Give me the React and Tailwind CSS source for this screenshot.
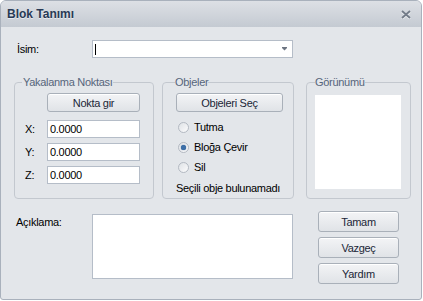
import React from 'react';

const btn = 'flex items-center justify-center rounded-[3px] border border-[#a9b0b9] bg-linear-to-b from-[#f3f4f6] to-[#e0e3e7] shadow-[inset_0_1px_0_#ffffff] text-[#1b2637]';
const field = 'border border-[#b5bdc8] bg-white';
const group = 'h-[124px] min-w-0 shrink-0 rounded-[4px] border border-[#c3c8cf]';

const Radio = ({ checked, label }) => (
    <div className="flex h-[20px] items-center gap-[5px] pl-[3px]">
        <div className="flex h-[11px] w-[11px] items-center justify-center rounded-full border border-[#b3b9c2] bg-linear-to-br from-[#dfe2e6] to-[#fbfbfc]">
            {checked && <div className="h-[5px] w-[5px] rounded-full bg-[#3d6fa8] shadow-[0_0_1px_#1d4a80]"></div>}
        </div>
        <span>{label}</span>
    </div>
);

const CoordRow = ({ axis }) => (
    <div className="flex h-[18px] items-center">
        <span className="w-[22px]">{axis}:</span>
        <div className={`${field} flex h-[18px] w-[93px] items-center pl-[2px]`}>0.0000</div>
    </div>
);

const App = () => {
    return (
        <div className="h-[301px] w-[423px] bg-white font-['Liberation_Sans',Arial,sans-serif] text-[11px] leading-[14px] tracking-[-0.3px] text-black">
            <div className="flex h-[300px] w-[422px] flex-col overflow-hidden rounded-t-[6px] rounded-b-[3px] border border-[#a9b1bc] bg-[#e3e6ea]">
                {/* title bar */}
                <div className="flex h-[26px] shrink-0 items-center justify-between bg-linear-to-b from-[#dde0e5] to-[#c4cad2] pr-[10px] pl-[6px]">
                    <span className="text-[12px] font-bold tracking-normal text-[#283a55] [text-shadow:0_1px_0_#e8ebef]">Blok Tanımı</span>
                    <svg width="10" height="9" viewBox="0 0 10 9">
                        <path d="M1 1 L9 8 M9 1 L1 8" stroke="#eef0f3" strokeWidth="2" transform="translate(0 1)" />
                        <path d="M1 1 L9 8 M9 1 L1 8" stroke="#737c89" strokeWidth="1.8" />
                    </svg>
                </div>

                {/* name row */}
                <div className="mt-[13px] flex h-[18px] items-center pl-[16px]">
                    <span className="w-[75px]">İsim:</span>
                    <div className={`${field} flex h-[18px] w-[201px] items-center justify-between pr-[5px] pl-[2px]`}>
                        <div className="h-[11px] w-px bg-black"></div>
                        <svg width="5" height="4" viewBox="0 0 5 4">
                            <path d="M0 0 H5 V1 L2.5 3.5 L0 1 Z" fill="#6d7582" />
                        </svg>
                    </div>
                </div>

                {/* groups */}
                <div className="mt-[17px] ml-[13px] flex">
                    <fieldset className={`${group} w-[140px] px-[7px]`}>
                        <legend className="px-[1px] text-[#56657b]">Yakalanma Noktası</legend>
                        <div className="ml-[3px] flex flex-col gap-[5px]">
                            <div className={`${btn} mt-[4px] mb-[3px] ml-[22px] h-[19px] w-[93px]`}>Nokta gir</div>
                            <CoordRow axis="X" />
                            <CoordRow axis="Y" />
                            <CoordRow axis="Z" />
                        </div>
                    </fieldset>

                    <fieldset className={`${group} ml-[8px] w-[132px] px-[12px]`}>
                        <legend className="text-[#56657b]">Objeler</legend>
                        <div className={`${btn} mt-[4px] ml-[1px] h-[19px] w-[107px]`}>Objeleri Seç</div>
                        <div className="mt-[5px] flex flex-col">
                            <Radio label="Tutma" />
                            <Radio label="Bloğa Çevir" checked />
                            <Radio label="Sil" />
                        </div>
                        <div className="mt-[4px] ml-[1px] whitespace-nowrap">Seçili obje bulunamadı</div>
                    </fieldset>

                    <fieldset className={`${group} ml-[12px] w-[105px] px-[8px]`}>
                        <legend className="text-[#56657b]">Görünümü</legend>
                        <div className="mt-[6px] h-[94px] w-[86px] bg-white"></div>
                    </fieldset>
                </div>

                {/* description + actions */}
                <div className="mt-[12px] flex pl-[15px]">
                    <span className="mt-[4px] w-[76px]">Açıklama:</span>
                    <div className={`${field} mt-[3px] h-[65px] w-[201px]`}></div>
                    <div className="ml-[25px] flex flex-col gap-[5px]">
                        <div className={`${btn} h-[21px] w-[81px]`}>Tamam</div>
                        <div className={`${btn} h-[21px] w-[81px]`}>Vazgeç</div>
                        <div className={`${btn} h-[21px] w-[81px]`}>Yardım</div>
                    </div>
                </div>
            </div>
        </div>
    );
};

export default App;
